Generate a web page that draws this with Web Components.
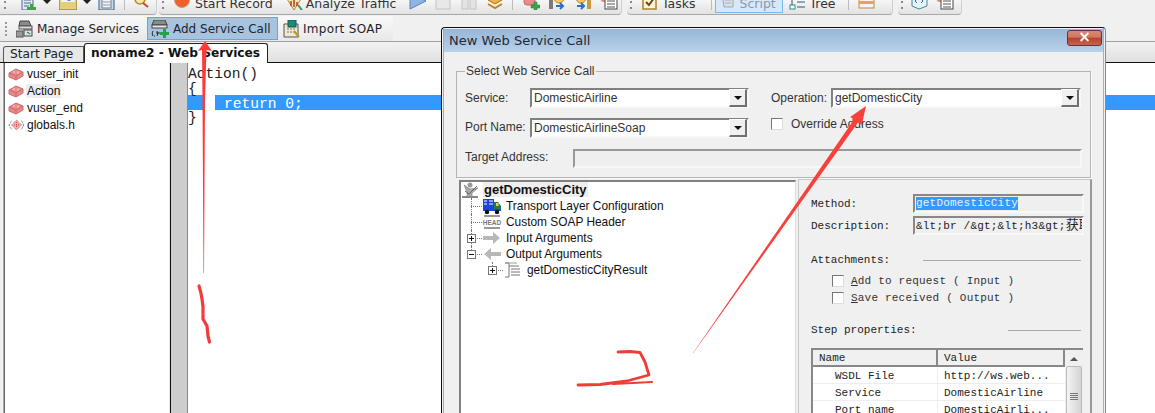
<!DOCTYPE html>
<html>
<head>
<meta charset="utf-8">
<title>New Web Service Call</title>
<style>
    html, body { margin: 0; padding: 0; overflow: hidden; background: #f0f0f0; }
</style>
</head>
<body>
<lr-app>
    <lr-top-toolbar></lr-top-toolbar>
    <lr-service-bar></lr-service-bar>
    <lr-tabs></lr-tabs>
    <lr-workspace></lr-workspace>
    <lr-dialog slot="over"></lr-dialog>
    <lr-scribbles slot="over"></lr-scribbles>
</lr-app>

<script>
const ICONS = {
    docplus: `<rect x="3" y="0" width="11" height="14" fill="#dfe8f2" stroke="#4a6a8a"/><path d="M5 4h7M5 7h7M5 10h5" stroke="#4a6a8a"/><path d="M11 8h3v3h3v3h-3v3h-3v-3H8v-3h3z" fill="#3fa34d"/>`,
    folder: `<rect x="0" y="-2" width="18" height="16" fill="#e6cf7a" stroke="#7c6a2a"/><rect x="2" y="-2" width="14" height="8" fill="#eef3f8"/><circle cx="10" cy="3" r="2" fill="#3f7fc0"/>`,
    save: `<rect x="1" y="-2" width="15" height="16" fill="#c9dcee" stroke="#3a5a7a"/><rect x="4" y="3" width="9" height="9" fill="#f4f4f4" stroke="#6a7a8a"/><path d="M5 6h7M5 9h7" stroke="#8a9aaa"/>`,
    find: `<circle cx="7" cy="3" r="5" fill="#f6e9a8" stroke="#b58a2a" stroke-width="1.5"/><path d="M10 7l5 4" stroke="#c0502a" stroke-width="2"/>`,
    record: `<circle cx="8" cy="4" r="7.5" fill="#f0602a" stroke="#c0a090"/>`,
    analyze: `<path d="M2 3l7-5 7 5-7 11z" fill="#f6eab0" stroke="#a8903a"/><path d="M6 5v5M9 3v8M12 6v4" stroke="#c0392b" stroke-width="1.5"/><path d="M13 9l4 5" stroke="#3f9a4d" stroke-width="2"/>`,
    play: `<path d="M1 -3L17 5 1 13z" fill="#8fb4e6" stroke="#5a80b8"/>`,
    stopg: `<rect x="1" y="-2" width="14" height="15" fill="#e8e8e8" stroke="#c4c4c4"/>`,
    pause: `<rect x="1" y="-2" width="6" height="15" fill="#e4e4e4" stroke="#c4c4c4"/><rect x="9" y="-2" width="6" height="15" fill="#e4e4e4" stroke="#c4c4c4"/>`,
    layers: `<path d="M8 0l7 4-7 4-7-4z" fill="#f0b04a" stroke="#a8701a"/><path d="M1 8l7 4 7-4" fill="none" stroke="#c8801a" stroke-width="2"/>`,
    pinkplus: `<rect x="2" y="-2" width="11" height="11" rx="3" fill="#ea8a8a" stroke="#c86a6a"/><path d="M12 6h3v3h3v3h-3v3h-3v-3H9V9h3z" fill="#3fa34d" stroke="#2a7a3a" stroke-width=".5"/>`,
    pagea: `<rect x="1" y="-2" width="4" height="15" fill="#7a7a7a"/><circle cx="11" cy="2" r="5" fill="#f6c85a" stroke="#b88a2a"/><path d="M8 10h7M12 7l3 3-3 3" fill="none" stroke="#2a70c0" stroke-width="2"/>`,
    pageb: `<circle cx="7" cy="2" r="5" fill="#f6c85a" stroke="#b88a2a"/><path d="M3 10h7M7 7l3 3-3 3" fill="none" stroke="#2a70c0" stroke-width="2"/><rect x="13" y="-2" width="4" height="15" fill="#c89a3a"/>`,
    table: `<circle cx="3" cy="2" r="4" fill="#ea8a6a"/><rect x="4" y="2" width="12" height="11" fill="#fff" stroke="#444"/><path d="M6 5h8M6 8h8M6 11h8" stroke="#555"/>`,
    tasks: `<rect x="1" y="0" width="13" height="13" fill="#fff6d8" stroke="#a8842a" stroke-width="1.5"/><path d="M4 6l3 3 5-7" fill="none" stroke="#6a4a1a" stroke-width="2"/>`,
    script: `<path d="M2 -2h11v14H4z" fill="#d8dfe8" stroke="#a0a8b0"/><path d="M5 2h6M5 5h6M5 8h6" stroke="#a8b0b8"/>`,
    tree: `<rect x="1" y="-1" width="5" height="4" fill="#fff" stroke="#2a8a8a"/><rect x="1" y="9" width="5" height="4" fill="#fff" stroke="#2a8a8a"/><path d="M3 3v6M8 1h8M8 6h8M8 11h8" stroke="#2a5a7a"/>`,
    orange: `<rect x="1" y="-3" width="15" height="15" fill="#f4f4f4" stroke="#c08a2a"/><rect x="1" y="5" width="15" height="3" fill="#f0a050"/>`,
    code: `<path d="M1 0l7 3 8-3v10l-8 3-7-3z" fill="#e8f2f6" stroke="#3a8a9a"/><path d="M6 3l-2 2 2 2M10 3l2 2-2 2" fill="none" stroke="#3a6a9a"/>`,
    manage: `<path d="M4 1h9l2 5H3z" fill="#8a8a8a" stroke="#444"/><rect x="3" y="6" width="13" height="3" fill="#d8d8d8" stroke="#555"/><rect x="0" y="11" width="7" height="6" fill="#999" stroke="#555"/><rect x="8" y="10" width="8" height="6" fill="#e4e4e4" stroke="#444"/><path d="M11 12l3 2" stroke="#2a8a7a" stroke-width="1.5"/>`,
    addcall: `<path d="M3 0h11l2 5H1z" fill="#8a8a8a" stroke="#444"/><rect x="1" y="5" width="15" height="3" fill="#e6e6e6" stroke="#444"/><path d="M2 11c-1 2-1 4 0 5M6 11c1 2 1 4 0 5" fill="none" stroke="#222"/><path d="M3 16h1M5 13h5" stroke="#222"/><path d="M12 9h3v3h3v3h-3v3h-3v-3H9v-3h3z" fill="#25a244"/>`,
    importsoap: `<path d="M2 4h14v13H2z" fill="#efe9d0" stroke="#555"/><rect x="6" y="0" width="8" height="7" fill="#1f8a7a" stroke="#0f5a50"/><path d="M5 9h9M5 12h9" stroke="#777" stroke-dasharray="2 1"/><path d="M12 11l5 6" stroke="#b89a2a" stroke-width="2"/>`,
    brick: `<path d="M1 7l7-4 7 3v4l-7 4-7-3z" fill="#e88a8a" stroke="#c87070"/><path d="M1 7l7 3 7-4M8 10v4" fill="none" stroke="#d06a6a"/><circle cx="6" cy="6" r="1.3" fill="#f4b0b0"/><circle cx="10" cy="6.5" r="1.3" fill="#f4b0b0"/>`,
    globals: `<path d="M1 8l3-5M1 8l3 5M16 8l-3-5M16 8l-3 5" stroke="#666" stroke-dasharray="1 1" fill="none"/><path d="M8.500 3l5 5-5 5-5-5z" fill="#f2b0b0" stroke="#d04a4a" stroke-dasharray="1 1"/><path d="M6 8h5M8.500 5v6" stroke="#d04a4a" stroke-dasharray="1 1"/>`,
    operation: `<path d="M3 3l6 4 8-1-6 5v5H6V10z" fill="#aaa" stroke="#777" stroke-width=".6"/><circle cx="9" cy="3" r="2.500" fill="#999"/><path d="M1 15h16" stroke="#888" stroke-width="2"/><path d="M4 9l4 3 8-8" fill="none" stroke="#666"/>`,
    truck: `<rect x="1" y="1" width="11" height="9" fill="#1a45e0"/><path d="M2 3h3M7 3h4M2 6h3M7 6h4" stroke="#fff"/><rect x="1" y="10" width="18" height="3" fill="#1a45e0"/><path d="M12 4h4l3 4v3h-7z" fill="#1f7a5a"/><rect x="14" y="5" width="2.500" height="3" fill="#f4d03a"/><circle cx="5" cy="14" r="2.200" fill="#111"/><circle cx="15" cy="14" r="2.200" fill="#111"/>`,
    head: `<rect x="2" y="1" width="16" height="2" fill="#999"/><rect x="2" y="13" width="16" height="2" fill="#999"/><text x="10" y="11" font-size="6.500" font-family="Liberation Sans" font-weight="700" text-anchor="middle" fill="#777">HEAD</text>`,
    argin: `<path d="M1 6h10V2l7 6-7 6v-4H1z" fill="#b8b8b8"/>`,
    argout: `<path d="M19 6H9V2L2 8l7 6v-4h10z" fill="#b8b8b8"/>`,
    result: `<path d="M2 1h4v14H2M6 4h10M8 7h9M8 10h9M8 13h9" fill="none" stroke="#777"/><path d="M2 1h12" stroke="#999"/>`,
};

// small base class: shadow root from the static css and markup
class Base extends HTMLElement {
    constructor() {
        super();
        this.rootElement = this.attachShadow({mode: 'open'});
    }

    connectedCallback() {
        this.rootElement.innerHTML = `<style>${this.css()}</style>${this.markup()}`;
    }

    css() { return ':host { display: block; }'; }
    markup() { return '<slot></slot>'; }
}

class LrIcon extends Base {
    css() {
        return `:host { display: inline-block; flex: none; line-height: 0; }
            svg { overflow: hidden; display: block; }`;
    }
    markup() {
        const w = this.getAttribute('w') || 18;
        const h = this.getAttribute('h') || 18;
        const box = this.getAttribute('box') || `0 0 ${w} ${h}`;
        return `<svg width="${w}" height="${h}" viewBox="${box}">${ICONS[this.getAttribute('name')]}</svg>`;
    }
}

class LrApp extends Base {
    css() {
        return `:host { display: block; position: relative; width: 1155px; height: 413px; overflow: hidden; background: #f0f0f0;
            font-family: "Liberation Sans", Arial, sans-serif; font-size: 12px; color: #111; }`;
    }
    markup() { return '<slot></slot><slot name="over"></slot>'; }
}

class LrTopToolbar extends Base {
    css() {
        return `:host { display: flex; height: 15px; overflow: hidden; font-family: "DejaVu Sans", sans-serif; font-size: 12.500px; color: #333; }
            .group { display: flex; align-items: flex-end; height: 15px; box-sizing: border-box; padding-bottom: 1px; flex: none;
                background: linear-gradient(#f6f6f6, #e2e2e2); border-bottom: 1px solid #a8a8a8; border-right: 1px solid #cfcfcf; border-radius: 0 0 4px 0; }
            .i { flex: none; height: 13px; margin-bottom: 3px; overflow: hidden; display: flex; align-items: flex-end; }
            .t { flex: none; line-height: 17px; margin-bottom: 1px; white-space: nowrap; }
            .dots { flex: none; width: 2px; height: 8px; margin-bottom: 4px; border-top: 2px dotted #888; border-bottom: 2px dotted #888; box-sizing: border-box; }
            .sep { flex: none; width: 1px; height: 14px; margin-bottom: 3px; background: #bbb; }
            .caret { flex: none; width: 0; height: 0; border: 4px solid transparent; border-top-color: #222; border-bottom: 0; margin-bottom: 9px; }
            .active { display: flex; align-items: flex-end; gap: 4px; height: 14px; box-sizing: border-box; width: 68px; margin-left: 3px; padding: 0 0 3px 4px; flex: none;
                background: #d8e8f8; border: 1px solid #7ab8f0; border-top: 0; color: #8a9aaa; }
            .active span { line-height: 15px; margin-bottom: -2px; }`;
    }
    markup() {
        const ic = (name, ml) => `<lr-icon class="i" name="${name}" w="18" h="13" box="0 1 18 13" style="margin-left:${ml}px"></lr-icon>`;
        const tx = (text, ml) => `<div class="t" style="margin-left:${ml}px">${text}</div>`;
        return `
        <div class="group" style="width:157px; padding-left:4px;">
            <div class="dots"></div>
            ${ic('docplus', 13)}<div class="caret" style="margin-left:6px"></div>
            ${ic('folder', 8)}<div class="caret" style="margin-left:6px"></div>
            ${ic('save', 7)}<div class="sep" style="margin-left:8px"></div>
            ${ic('find', 8)}
        </div>
        <div class="group" style="width:463px; margin-left:2px; padding-left:3px; border-radius:0 0 4px 4px;">
            <div class="dots"></div>
            ${ic('record', 10)}${tx('Start Record', 3)}
            ${ic('analyze', 12)}${tx('Analyze Traffic', 3)}
            ${ic('play', 12)}${ic('stopg', 8)}${ic('pause', 8)}${ic('layers', 8)}
            <div class="sep" style="margin-left:7px"></div>
            ${ic('pinkplus', 9)}${ic('pagea', 8)}${ic('pageb', 8)}${ic('table', 9)}
        </div>
        <div class="group" style="width:266px; margin-left:5px; padding-left:3px; border-radius:0 0 4px 4px;">
            <div class="dots"></div>
            ${ic('tasks', 10)}${tx('Tasks', 2)}
            <div class="sep" style="margin-left:15px"></div>
            <div class="active"><lr-icon name="script" w="16" h="13" box="0 1 16 13"></lr-icon><span>Script</span></div>
            ${ic('tree', 6)}${tx('Tree', 3)}
            <div class="sep" style="margin-left:12px"></div>
            ${ic('orange', 9)}
        </div>
        <div class="group" style="width:64px; margin-left:5px; padding-left:3px; border-radius:0 0 4px 4px;">
            <div class="dots"></div>
            ${ic('code', 8)}${ic('table', 8)}
        </div>`;
    }
}

class LrServiceBar extends Base {
    css() {
        return `:host { display: block; height: 26px; padding-top: 1px; box-sizing: border-box; font-family: "DejaVu Sans", sans-serif; font-size: 12px; color: #1c2430; background: #f0f0f0; }
            .bar { display: flex; align-items: center; width: 393px; height: 25px; box-sizing: border-box; padding-left: 5px;
                background: linear-gradient(#f9f9f9, #e8e8e8); border-radius: 0 4px 4px 0; }
            .dots { width: 2px; height: 14px; border-left: 2px dotted #999; margin-right: 9px; box-sizing: border-box; flex: none; }
            .b { display: flex; align-items: center; gap: 3px; height: 23px; box-sizing: border-box; flex: none; white-space: nowrap; }
            .on { background: #a6c4e0; border: 1px solid #5aa8ee; padding-left: 3px; gap: 2px; width: 131px; }
            lr-icon { display: block; }`;
    }
    markup() {
        return `<div class="bar">
            <div class="dots"></div>
            <div class="b" style="width:131px;"><lr-icon name="manage"></lr-icon><span>Manage Services</span></div>
            <div class="b on"><lr-icon name="addcall" w="20"></lr-icon><span>Add Service Call</span></div>
            <div class="b"><lr-icon name="importsoap" style="margin-left:4px;"></lr-icon><span style="letter-spacing:.3px;">Import SOAP</span></div>
        </div>`;
    }
}

class LrTabs extends Base {
    css() {
        return `:host { display: flex; align-items: flex-end; height: 22px; box-sizing: border-box; padding-left: 3px; border-top: 1px solid #a0a0a0;
                border-bottom: 1px solid #111; background: linear-gradient(#f2f2f2, #e0e0e0); font-family: "DejaVu Sans", sans-serif; font-size: 12px; }
            .t { box-sizing: border-box; border: 1px solid #555; border-bottom: 0; flex: none; }
            .off { width: 81px; height: 16px; line-height: 15px; padding-left: 6px; background: #e8e8e8; border-radius: 3px 0 0 0; color: #222; font-size: 12.200px; }
            .on { width: 184px; height: 20px; line-height: 19px; padding-left: 6px; background: #fff; font-weight: bold; font-size: 12.200px; margin-bottom: -1px; border-radius: 3px 3px 0 0; border-color: #222; color: #111; white-space: nowrap; }`;
    }
    markup() {
        return `<div class="t off">Start Page</div><div class="t on">noname2 - Web Services</div>`;
    }
}

class LrWorkspace extends Base {
    css() {
        return `:host { display: flex; height: 350px; background: #fff; }
            .edge { width: 5px; flex: none; box-sizing: border-box; border-left: 3px solid #f0f0f0; border-right: 1px solid #666; background: #aaa; }
            .list { width: 165px; flex: none; box-sizing: border-box; padding-top: 1px; border-right: 1px solid #e8e8e8; }
            .row { display: flex; align-items: center; height: 17px; padding-left: 3px; gap: 3px; color: #111; }
            .row b { font-weight: normal; background: #eee; padding: 0 1px; margin-left: -1px; }
            .gutter { width: 18px; box-sizing: border-box; flex: none; background: #cdcdcd; border-left: 1px solid #111; border-right: 1px solid #888; }
            .code { flex: 1; padding-top: 4px; font-family: "Liberation Mono", monospace; font-size: 14.600px; line-height: 14.700px; color: #222; }
            .ln { height: 14.700px; white-space: pre; }
            .sel { display: flex; background: #3399ff; color: #fff; height: 15px; line-height: 18px; margin-top: -1px; margin-bottom: 1px; overflow: hidden; }
            .sel i { display: block; width: 16px; }
            .sel u { display: block; width: 11px; background: #fff; }
            .sel span { padding-left: 9px; }`;
    }
    markup() {
        return `<div class="edge"></div>
        <div class="list">
            <div class="row" style="margin-top:1px;"><lr-icon name="brick" w="16" h="16"></lr-icon>vuser_init</div>
            <div class="row"><lr-icon name="brick" w="16" h="16"></lr-icon><b>Action</b></div>
            <div class="row"><lr-icon name="brick" w="16" h="16"></lr-icon>vuser_end</div>
            <div class="row"><lr-icon name="globals" w="16" h="16"></lr-icon>globals.h</div>
        </div>
        <div class="gutter"></div>
        <div class="code">
            <div class="ln">Action()</div>
            <div class="ln">{</div>
            <div class="sel"><i></i><u></u><span>return 0;</span></div>
            <div class="ln">}</div>
        </div>`;
    }
}

class LrCombo extends Base {
    css() {
        return `:host { display: flex; box-sizing: border-box; height: 20px; background: #fff; border: 2px solid #808080; border-right-color: #f8f8f8; border-bottom-color: #f8f8f8; flex: none; }
            .v { flex: 1; line-height: 17px; padding-left: 2px; white-space: nowrap; overflow: hidden; }
            .b { width: 18px; height: 18px; margin-top: -1px; box-sizing: border-box; background: #f0f0f0; border: 1px solid #fff; border-right: 2px solid #707070; border-bottom: 2px solid #707070; display: flex; align-items: center; justify-content: center; }
            .b i { width: 0; height: 0; border: 4px solid transparent; border-top: 4px solid #111; border-bottom: 0; }`;
    }
    markup() {
        return `<div class="v">${this.getAttribute('value')}</div><div class="b"><i></i></div>`;
    }
}

class LrCheck extends Base {
    css() {
        return `:host { display: flex; align-items: center; height: 14px; color: #333; }
            .c { width: 12px; height: 12px; box-sizing: border-box; background: #fff; border: 1px solid #777; border-right-color: #ddd; border-bottom-color: #ddd; flex: none; }
            .l { white-space: nowrap; }`;
    }
    markup() {
        return `<div class="c"></div><div class="l" style="margin-left:${this.getAttribute('gap') || 7}px"><slot></slot></div>`;
    }
}

class LrTreeRow extends Base {
    css() {
        return `:host { display: flex; align-items: center; height: 16px; white-space: nowrap; color: #111; font-size: 11.900px; }
            .cell { position: relative; width: 21px; height: 16px; flex: none; }
            .cell::before { content: ""; position: absolute; left: 10px; top: 0; height: 100%; border-left: 1px dotted #777; }
            .cell::after { content: ""; position: absolute; left: 10px; top: 8px; width: 11px; border-top: 1px dotted #777; }
            .last::before { height: 8px; }
            .box { position: absolute; left: 6px; top: 4px; width: 9px; height: 9px; box-sizing: border-box; border: 1px solid #777; background: #fff; z-index: 1; }
            .box::before { content: ""; position: absolute; left: 1px; top: 3px; width: 5px; height: 1px; background: #111; }
            .plus::after { content: ""; position: absolute; left: 3px; top: 1px; width: 1px; height: 5px; background: #111; }
            .spacer { width: 21px; flex: none; }
            .txt { margin-left: 4px; }`;
    }
    markup() {
        const level = +(this.getAttribute('level') || 0);
        const box = this.getAttribute('box');
        const last = this.hasAttribute('last') ? ' last' : '';
        const boxEl = box ? `<div class="box ${box}"></div>` : '';
        return `${'<div class="spacer"></div>'.repeat(level)}<div class="cell${last}">${boxEl}</div>
            <lr-icon name="${this.getAttribute('icon')}" w="20" h="16"></lr-icon><div class="txt"><slot></slot></div>`;
    }
}

class LrPropTable extends Base {
    css() {
        return `:host { display: flex; box-sizing: border-box; width: 272px; height: 80px; border: 2px solid #888; border-bottom: 0; background: #fff;
                font-family: "Liberation Mono", monospace; font-size: 11px; color: #222; }
            .tb { width: 252px; flex: none; }
            .hd { display: flex; height: 17px; background: #f0f0f0; line-height: 16px; box-sizing: border-box; border-bottom: 2px solid #888; }
            .hd div { box-sizing: border-box; padding-left: 6px; border-right: 2px solid #888; }
            .r { display: flex; height: 17px; line-height: 18px; border-bottom: 1px solid #eee; box-sizing: border-box; white-space: nowrap; }
            .n { width: 125px; padding-left: 22px; box-sizing: border-box; border-right: 1px solid #eee; }
            .w { padding-left: 6px; }
            .sb { width: 18px; background: #f0f0f0; flex: none; display: flex; flex-direction: column; align-items: center; }
            .up { width: 0; height: 0; border: 4px solid transparent; border-bottom: 4px solid #555; border-top: 0; margin: 7px 0 5px; }
            .th { width: 16px; height: 60px; box-sizing: border-box; border: 1px solid #bbb; border-radius: 2px; background: linear-gradient(90deg, #f4f4f4, #d4d4d4); display: flex; flex-direction: column; align-items: center; justify-content: center; gap: 1px; }
            .th i { width: 8px; height: 1px; background: #777; }`;
    }
    markup() {
        const rows = [['WSDL File', 'http://ws.web...'], ['Service', 'DomesticAirline'], ['Port name', 'DomesticAirli...']];
        return `<div class="tb">
            <div class="hd"><div style="width:125px;">Name</div><div style="width:127px;">Value</div></div>
            ${rows.map(r => `<div class="r"><div class="n">${r[0]}</div><div class="w">${r[1]}</div></div>`).join('')}
        </div>
        <div class="sb"><div class="up"></div><div class="th"><i></i><i></i><i></i><i></i></div></div>`;
    }
}

class LrDialog extends Base {
    css() {
        return `:host { display: block; position: absolute; left: 441px; top: 27px; width: 665px; height: 420px; box-sizing: border-box;
                border: 1px solid #111; border-right: 1px solid #3aa6d0; border-bottom: 0; border-radius: 4px 4px 0 0; background: #f0f0f0;
                font-family: "Liberation Sans", Arial, sans-serif; font-size: 12px; color: #333; }
            .frame { margin: 1px 1px 0 1px; border-left: 1px solid #8fb0d0; border-right: 1px solid #8fb8d8; }
            .title { display: flex; align-items: center; justify-content: space-between; height: 23px; padding: 0 1px 0 5px; background: linear-gradient(#97b6d6, #b9d1ea);
                font-family: "DejaVu Sans", sans-serif; font-size: 13px; color: #1d2a38; }
            .x { width: 35px; height: 16px; box-sizing: border-box; border: 1px solid #6a3040; border-radius: 3px; color: #fff; font: bold 15px/13px "DejaVu Sans", sans-serif; text-align: center;
                background: linear-gradient(#d98a78 0, #cf7560 45%, #b8402a 50%, #c8644c 100%); margin-top: -5px; }
            fieldset { margin: 12px 13px 0 12px; padding: 10px 8px 0 8px; height: 114px; box-sizing: border-box; width: 635px; border: 1px solid #b4b4b4; box-shadow: 1px 1px 0 #fafafa; min-width: 0; }
            legend { padding: 0 1px; margin-left: 0; font-size: 12px; line-height: 14px; color: #333; }
            .row { display: flex; align-items: center; height: 20px; margin-bottom: 10px; white-space: nowrap; }
            .lab { flex: none; margin-top: -1px; }
            .up { margin-top: -3px; }
            .ro { flex: none; box-sizing: border-box; width: 509px; height: 19px; border: 2px solid #999; border-right-color: #f8f8f8; border-bottom-color: #f8f8f8; background: #efefef; }
            .lower { display: flex; margin-top: 2px; }
            .tree { width: 337px; height: 240px; margin-left: 15px; box-sizing: border-box; flex: none; border: 2px solid #808080; border-right: 1px solid #ddd; border-bottom: 0; background: #fff; }
            .root { display: flex; align-items: center; height: 16px; }
            .root b { background: #eee; margin: -2px 0 0 2px; padding: 0 1px; color: #111; font-size: 13px; line-height: 15px; }
            .side { width: 294px; margin-left: 2px; margin-top: -1px; box-sizing: border-box; flex: none; padding: 14px 0 0 12px; height: 240px; border: 1px solid #c8c8c8; border-right: 2px solid #999; border-bottom: 0;
                font-family: "Liberation Mono", monospace; font-size: 11px; color: #222; }
            .fld { display: flex; align-items: center; height: 19px; margin-bottom: 3px; white-space: nowrap; }
            .fld span { width: 102px; flex: none; }
            .inp { width: 171px; height: 19px; box-sizing: border-box; border: 2px solid #888; border-right-color: #f8f8f8; border-bottom-color: #f8f8f8; background: #efefef; padding: 1px 1px 0; line-height: 13px; overflow: hidden; white-space: nowrap; flex: none; letter-spacing: .2px; font-family: "Liberation Mono", "Noto Sans CJK SC", monospace; }
            .inp em { font-style: normal; background: #3399ff; color: #e8f2ff; display: inline-block; height: 13px; line-height: 13px; }
            .inp b { font-weight: normal; font-size: 13px; }
            .head { display: flex; align-items: center; height: 14px; white-space: nowrap; }
            .head span { flex: none; }
            .head i { display: block; height: 1px; background: #a8a8a8; }
            .chk { margin-left: 21px; height: 17px; letter-spacing: .2px; }
            .chk u { text-decoration: underline; }`;
    }
    markup() {
        return `<div class="frame">
            <div class="title"><span>New Web Service Call</span><div class="x">×</div></div>
            <fieldset>
                <legend>Select Web Service Call</legend>
                <div class="row">
                    <div class="lab" style="width:65px;">Service:</div>
                    <lr-combo value="DomesticAirline" style="width:219px;"></lr-combo>
                    <div class="lab" style="margin-left:22px; width:60px;">Operation:</div>
                    <lr-combo value="getDomesticCity" style="width:250px;"></lr-combo>
                </div>
                <div class="row">
                    <div class="lab up" style="width:65px;">Port Name:</div>
                    <lr-combo value="DomesticAirlineSoap" style="width:219px;"></lr-combo>
                    <lr-check gap="8" style="margin:-9px 0 0 22px;">Override Address</lr-check>
                </div>
                <div class="row">
                    <div class="lab up" style="width:108px;">Target Address:</div>
                    <div class="ro"></div>
                </div>
            </fieldset>
            <div class="lower">
                <div class="tree">
                    <div class="root"><lr-icon name="operation" w="20" h="16"></lr-icon><b>getDomesticCity</b></div>
                    <lr-tree-row icon="truck">Transport Layer Configuration</lr-tree-row>
                    <lr-tree-row icon="head">Custom SOAP Header</lr-tree-row>
                    <lr-tree-row icon="argin" box="plus">Input Arguments</lr-tree-row>
                    <lr-tree-row icon="argout" box="minus" last>Output Arguments</lr-tree-row>
                    <lr-tree-row icon="result" box="plus" level="1" last>getDomesticCityResult</lr-tree-row>
                </div>
                <div class="side">
                    <div class="fld"><span>Method:</span><div class="inp"><em>getDomesticCity</em></div></div>
                    <div class="fld"><span>Description:</span><div class="inp">&amp;lt;br /&amp;gt;&amp;lt;h3&amp;gt;<b>获取</b></div></div>
                    <div class="head" style="margin-top:18px;"><span style="width:112px;">Attachments:</span><i style="width:158px;"></i></div>
                    <lr-check class="chk" style="margin-top:5px;"><u>A</u>dd to request ( Input )</lr-check>
                    <lr-check class="chk"><u>S</u>ave received ( Output )</lr-check>
                    <div class="head" style="margin-top:17px;"><span style="width:197px;">Step properties:</span><i style="width:73px;"></i></div>
                    <lr-prop-table style="margin-top:11px;"></lr-prop-table>
                </div>
            </div>
        </div>`;
    }
}

// the red pen marks sit over everything else
class LrScribbles extends Base {
    css() {
        return `:host { display: block; position: absolute; left: 0; top: 0; width: 1155px; height: 413px; pointer-events: none; }
            svg { display: block; }`;
    }
    markup() {
        return `<svg width="1155" height="413" viewBox="0 0 1155 413">
            <path d="M205 41L212 51L206.500 50L205 100L204 273L203.500 273L202.500 100L202 50L198 51Z" fill="#fb3a3a"/>
            <path d="M199 286Q201 292 202 299L203 307L203 319L207 326L208 336L209.500 342" fill="none" stroke="#f53a3a" stroke-width="3.200" stroke-linecap="round" stroke-linejoin="round"/>
            <path d="M866 106L861.800 125L858 122.400L693.300 353L693 353L854 119.600L850.200 117Z" fill="#f8403c"/>
            <path d="M618 352L630 351.500L640 352.500L645 362L649 375L627 381L600 384.500L578 385" fill="none" stroke="#f03c38" stroke-width="2.800" stroke-linecap="round" stroke-linejoin="round"/>
            <path d="M613 384L652 382" fill="none" stroke="#f03c38" stroke-width="2.200" stroke-linecap="round"/>
        </svg>`;
    }
}

window.customElements.define('lr-icon', LrIcon);
window.customElements.define('lr-app', LrApp);
window.customElements.define('lr-top-toolbar', LrTopToolbar);
window.customElements.define('lr-service-bar', LrServiceBar);
window.customElements.define('lr-tabs', LrTabs);
window.customElements.define('lr-workspace', LrWorkspace);
window.customElements.define('lr-combo', LrCombo);
window.customElements.define('lr-check', LrCheck);
window.customElements.define('lr-tree-row', LrTreeRow);
window.customElements.define('lr-prop-table', LrPropTable);
window.customElements.define('lr-dialog', LrDialog);
window.customElements.define('lr-scribbles', LrScribbles);
</script>
</body>
</html>
